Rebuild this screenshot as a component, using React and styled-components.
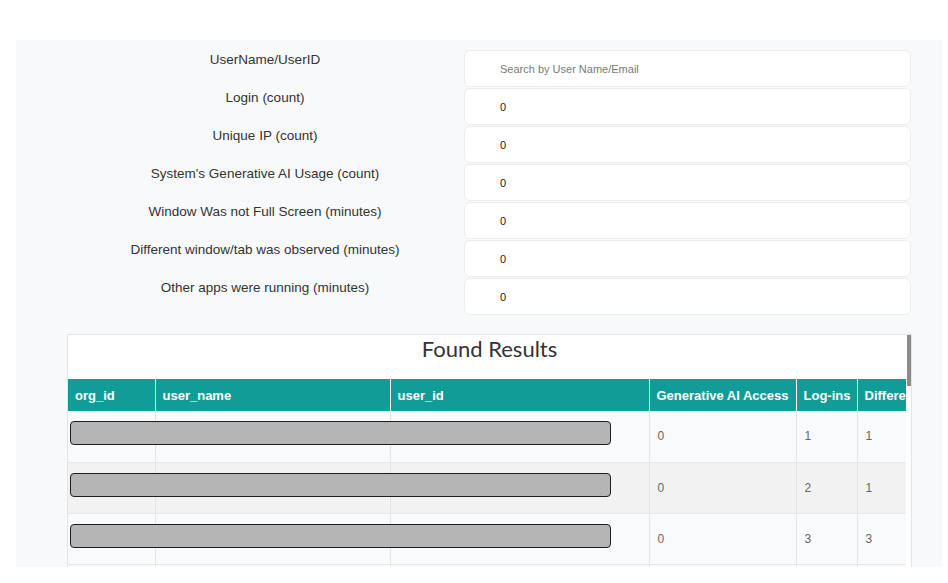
import React from 'react';
import styled, { createGlobalStyle } from 'styled-components';

const Global = createGlobalStyle`
  html, body { margin: 0; padding: 0; background: #ffffff; }
  body { font-family: "Liberation Sans", Arial, sans-serif; }
  * { box-sizing: border-box; }
`;

const Page = styled.div`
  padding-top: 40px;
`;

const Panel = styled.main`
  margin-left: 16px;
  width: 926px;
  height: 527px;
  background: #f8f9fa;
  overflow: hidden;
  padding-top: 10px;
`;

const Form = styled.div`
  display: grid;
  grid-template-columns: 398px 447px;
  grid-auto-rows: 38px;
  padding-left: 50px;
`;

const Label = styled.div`
  text-align: center;
  font-size: 13.5px;
  line-height: 20px;
  color: #333;
  white-space: nowrap;
`;

const Field = styled.input`
  height: 37px;
  width: 100%;
  border: 1px solid #ececec;
  border-radius: 6px;
  background: #ffffff;
  padding: 0 0 0 35px;
  font-family: "Liberation Sans", Arial, sans-serif;
  font-size: 11px;
  color: #1a1a1a;
  outline: none;
  &::placeholder { color: #7a7a7a; }
`;

const Card = styled.section`
  position: relative;
  margin: 18px 0 0 51px;
  width: 845px;
  border: 1px solid #e4e4e4;
  background: #ffffff;
`;

const Title = styled.h2`
  margin: 0;
  height: 44px;
  line-height: 27px;
  text-align: center;
  font-family: Lato, "Open Sans", sans-serif;
  font-weight: 400;
  font-size: 22px;
  color: #333;
`;

const ScrollThumb = styled.div`
  position: absolute;
  top: 0;
  right: 0;
  width: 4px;
  height: 51px;
  background: #8c8c8c;
`;

const TableWrap = styled.div`
  width: 838px;
  overflow: hidden;
`;

const Table = styled.table`
  border-collapse: collapse;
  table-layout: fixed;
  width: 1300px;
`;

const Th = styled.th`
  height: 32px;
  background: #129c97;
  color: #ffffff;
  font-size: 13px;
  font-weight: 700;
  text-align: left;
  padding: 0 7px;
  white-space: nowrap;
  overflow: hidden;
  border-right: 1px solid rgba(255, 255, 255, 0.22);
`;

const Tr = styled.tr`
  height: 51px;
  background: ${p => (p.$alt ? '#f2f2f2' : '#f9fafb')};
`;

const Td = styled.td`
  position: relative;
  padding: 0 8px;
  font-size: 12px;
  color: #666;
  border-right: 1px solid #e4e4e4;
  border-bottom: 1px solid #e8e8e8;
  white-space: nowrap;
`;

const Redacted = styled.div`
  position: absolute;
  left: 2px;
  top: 10px;
  width: 541px;
  height: 24px;
  background: #b5b5b5;
  border: 1px solid #1e1e1e;
  border-radius: 4px;
`;

const fields = [
  ['UserName/UserID', null],
  ['Login (count)', '0'],
  ['Unique IP (count)', '0'],
  ["System's Generative AI Usage (count)", '0'],
  ['Window Was not Full Screen (minutes)', '0'],
  ['Different window/tab was observed (minutes)', '0'],
  ['Other apps were running (minutes)', '0'],
];

const columns = [
  ['org_id', 87],
  ['user_name', 235],
  ['user_id', 259],
  ['Generative AI Access', 147],
  ['Log-ins', 61],
  ['Different Window/Tab', 160],
  ['Not Full Screen', 140],
  ['Other Apps', 211],
];

const rows = [
  ['0', '1', '1', '0', '0'],
  ['0', '2', '1', '0', '0'],
  ['0', '3', '3', '0', '0'],
];

export default function App() {
  return (
    <Page>
      <Global />
      <Panel>
        <Form>
          {fields.map(([label, value]) => (
            <React.Fragment key={label}>
              <Label>{label}</Label>
              {value === null ? (
                <Field placeholder="Search by User Name/Email" readOnly />
              ) : (
                <Field value={value} readOnly />
              )}
            </React.Fragment>
          ))}
        </Form>
        <Card>
          <Title>Found Results</Title>
          <ScrollThumb />
          <TableWrap>
            <Table>
              <colgroup>
                {columns.map(([name, w]) => (
                  <col key={name} style={{ width: w }} />
                ))}
              </colgroup>
              <thead>
                <tr>
                  {columns.map(([name]) => (
                    <Th key={name}>{name}</Th>
                  ))}
                </tr>
              </thead>
              <tbody>
                {rows.map((r, i) => (
                  <Tr key={i} $alt={i % 2 === 1}>
                    <Td><Redacted /></Td>
                    <Td />
                    <Td />
                    {r.map((v, j) => (
                      <Td key={j}>{v}</Td>
                    ))}
                  </Tr>
                ))}
                <Tr>
                  {columns.map(([name]) => (
                    <Td key={name} />
                  ))}
                </Tr>
              </tbody>
            </Table>
          </TableWrap>
        </Card>
      </Panel>
    </Page>
  );
}
